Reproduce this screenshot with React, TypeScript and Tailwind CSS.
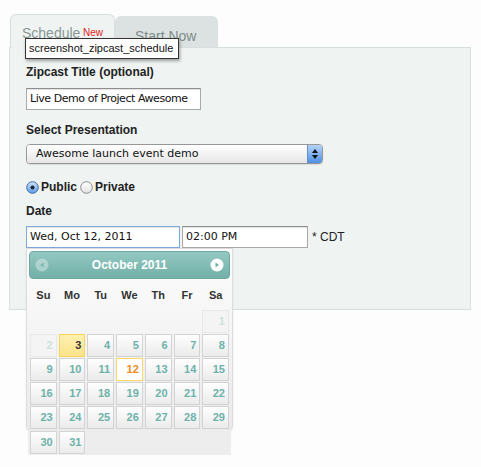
import React from 'react';

const weeks: (number | null)[][] = [
  [null, null, null, null, null, null, 1],
  [2, 3, 4, 5, 6, 7, 8],
  [9, 10, 11, 12, 13, 14, 15],
  [16, 17, 18, 19, 20, 21, 22],
  [23, 24, 25, 26, 27, 28, 29],
];
const lastWeek = [30, 31];
const dayNames = ['Su', 'Mo', 'Tu', 'We', 'Th', 'Fr', 'Sa'];

const DayCell: React.FC<{ day: number }> = ({ day }) => {
  let cls =
    'border-[#d3d3d3] bg-gradient-to-b from-[#fefefe] to-[#ebebeb] text-[#6db2a9]';
  if (day < 3) cls = 'border-[#e8e8e8] bg-[#f4f4f4] text-[#cfe1de]';
  if (day === 3) cls = 'border-[#f6d45c] bg-gradient-to-b from-[#fdf0b0] to-[#fbe389] text-[#363636]';
  if (day === 12) cls = 'border-[#fcd965] bg-white text-[#ec8c1a]';
  return (
    <div
      className={`h-[23px] border text-right pr-[3px] leading-[21px] text-[11px] font-bold ${cls}`}
    >
      {day}
    </div>
  );
};

const Calendar: React.FC = () => (
  <div className="absolute left-[26px] top-[248px] w-[207px] h-[183px] rounded-b-[5px] border border-[#dcdcdc] bg-gradient-to-b from-[#fdfdfd] to-[#eaeaea] p-[2px] shadow-[0_1px_2px_rgba(0,0,0,0.08)]">
    <div className="h-[28px] rounded-[4px] border border-[#6ea9a1] bg-gradient-to-b from-[#93c9c2] to-[#72b0a8] flex items-center justify-between px-[5px]">
      <svg width="14" height="14" viewBox="0 0 14 14">
        <circle cx="7" cy="7" r="6.5" fill="#ffffff" fillOpacity="0.35" />
        <path d="M5 7 L8.5 4.5 L8.5 9.5 Z" fill="#7fb8b0" />
      </svg>
      <span className="text-[12px] font-bold text-white">October 2011</span>
      <svg width="14" height="14" viewBox="0 0 14 14">
        <circle cx="7" cy="7" r="6.5" fill="#ffffff" />
        <path d="M9 7 L5.5 4.5 L5.5 9.5 Z" fill="#6fb0a8" />
      </svg>
    </div>
    <div className="mt-[8px] h-[16px] grid grid-cols-7 gap-x-[2px] px-[1px] text-[11px] font-bold text-[#333] leading-[16px] text-center">
      {dayNames.map((d) => (
        <div key={d}>{d}</div>
      ))}
    </div>
    <div className="mt-[7px] grid grid-cols-7 gap-x-[2px] gap-y-[1px] px-[1px]">
      {weeks.flat().map((d, i) =>
        d === null ? <div key={i} className="h-[23px]" /> : <DayCell key={i} day={d} />
      )}
    </div>
    <div className="-mx-[1px] mt-[1px] pt-[1px] px-[2px] h-[25px] bg-[#ededed] grid grid-cols-7 gap-x-[2px]">
      {lastWeek.map((d) => (
        <DayCell key={d} day={d} />
      ))}
    </div>
  </div>
);

const TextBox: React.FC<{ value: string; className?: string }> = ({ value, className = '' }) => (
  <div
    className={`h-[22px] bg-white border border-[#a9a9a9] border-t-[#8e8e8e] shadow-[inset_0_1px_1px_rgba(0,0,0,0.12)] pl-[3px] text-[11px] leading-[20px] text-[#111] whitespace-nowrap overflow-hidden ${className}`}
    style={{ fontFamily: '"DejaVu Sans", sans-serif' }}
  >
    {value}
  </div>
);

const Radio: React.FC<{ checked?: boolean }> = ({ checked }) => (
  <svg width="13" height="13" viewBox="0 0 13 13">
    <defs>
      <linearGradient id="rb" x1="0" y1="0" x2="0" y2="1">
        <stop offset="0" stopColor="#cfe3fb" />
        <stop offset="1" stopColor="#5d9ae6" />
      </linearGradient>
      <linearGradient id="rw" x1="0" y1="0" x2="0" y2="1">
        <stop offset="0" stopColor="#ffffff" />
        <stop offset="1" stopColor="#e2e2e2" />
      </linearGradient>
    </defs>
    <circle cx="6.5" cy="6.5" r="5.8" fill={checked ? 'url(#rb)' : 'url(#rw)'} stroke={checked ? '#3e6fa8' : '#8c8c8c'} strokeWidth="1" />
    {checked && <circle cx="6.5" cy="6.5" r="2" fill="#1c2633" />}
  </svg>
);

export default function App() {
  return (
    <div
      className="relative min-h-[467px] bg-[#fdfdfd] pt-[13px] pl-[9px]"
      style={{ fontFamily: '"Liberation Sans", Arial, sans-serif' }}
    >
      <div className="flex items-end h-[34px] pl-[1px]">
        <div className="relative z-10 w-[105px] h-[34px] -mb-[1px] rounded-t-[6px] border border-b-0 border-[#d6dfdd] bg-[#eff3f2] pl-[11px] pt-[8px] text-[14px] text-[#899896]">
          Schedule
          <span className="absolute left-[72px] top-[10px] text-[10px] text-[#e21b1b]">New</span>
        </div>
        <div className="w-[103px] h-[31px] rounded-t-[6px] bg-[#dce2e1] pl-[20px] pt-[10px] text-[14px] text-[#7e8b8a]">
          Start Now
        </div>
      </div>

      <div className="w-[462px] h-[263px] border border-[#d6dfdd] bg-[#eff3f2] pl-[16px] pt-[17px]">
        <div className="text-[12px] leading-[15px] font-bold text-[#222]">Zipcast Title (optional)</div>
        <TextBox value="Live Demo of Project Awesome" className="mt-[8px] w-[175px] tracking-[-0.45px]" />

        <div className="mt-[13px] text-[12px] leading-[15px] font-bold text-[#222]">Select Presentation</div>
        <div className="mt-[6px] w-[297px] h-[20px] flex rounded-[4px] border border-[#979797] overflow-hidden shadow-[0_1px_1px_rgba(0,0,0,0.1)]">
          <div
            className="flex-1 bg-gradient-to-b from-[#ffffff] to-[#e6e6e6] pl-[9px] text-[11px] leading-[18px] text-[#111]"
            style={{ fontFamily: '"DejaVu Sans", sans-serif' }}
          >
            Awesome launch event demo
          </div>
          <div className="w-[15px] bg-gradient-to-b from-[#b4d4f7] to-[#4e8fe4] border-l border-[#6b8fc0] flex flex-col items-center justify-center gap-[2px]">
            <svg width="6" height="4" viewBox="0 0 6 4"><path d="M3 0 L6 4 L0 4 Z" fill="#111" /></svg>
            <svg width="6" height="4" viewBox="0 0 6 4"><path d="M0 0 L6 0 L3 4 Z" fill="#111" /></svg>
          </div>
        </div>

        <div className="mt-[16px] h-[14px] flex items-center text-[12px] font-bold text-[#222]">
          <Radio checked />
          <span className="ml-[2px]">Public</span>
          <span className="ml-[3px]"><Radio /></span>
          <span className="ml-[2px]">Private</span>
        </div>

        <div className="mt-[10px] text-[12px] leading-[15px] font-bold text-[#222]">Date</div>
        <div className="mt-[7px] flex items-center">
          <TextBox
            value="Wed, Oct 12, 2011"
            className="w-[154px] !border-[#7fa9dc] shadow-[0_0_2px_1px_rgba(110,160,225,0.6)]"
          />
          <TextBox value="02:00 PM" className="ml-[2px] w-[126px]" />
          <span className="ml-[4px] text-[12px] text-[#222]">* CDT</span>
        </div>
      </div>

      <div className="absolute left-[25px] top-[38px] z-20 w-[154px] h-[21px] border border-[#333] bg-white shadow-[1px_2px_3px_rgba(0,0,0,0.35)] pl-[3px] text-[11px] leading-[19px] text-[#111]">
        screenshot_zipcast_schedule
      </div>

      <Calendar />
    </div>
  );
}
